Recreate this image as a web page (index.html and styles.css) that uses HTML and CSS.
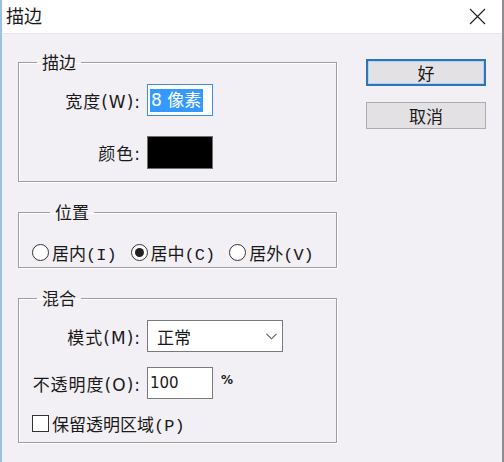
FILE: index.html
```html
<!DOCTYPE html>
<html lang="zh-CN">
<head>
    <meta charset="UTF-8">
    <meta name="viewport" content="width=device-width, initial-scale=1.0">
    <title>描边</title>
    <link rel="stylesheet" href="styles.css">
</head>
<body>
    <div class="dialog">
        <div class="titlebar">
            <span class="title">描边</span>
            <svg class="close" width="17" height="17" viewBox="0 0 17 17">
                <path d="M1 1L16 16M16 1L1 16" stroke="#1e1e1e" stroke-width="1.1" fill="none"/>
            </svg>
        </div>
        <div class="dialog-body">
            <div class="groups">
                <fieldset class="group group-stroke">
                    <legend>描边</legend>
                    <div class="form-grid">
                        <label class="field-label">宽度(W):</label>
                        <div class="text-input focused"><span class="selected">8 像素</span></div>
                        <label class="field-label">颜色:</label>
                        <div class="swatch"></div>
                    </div>
                </fieldset>

                <fieldset class="group group-position">
                    <legend>位置</legend>
                    <div class="radio-row">
                        <span class="radio"><span class="circle"></span>居内(I)</span>
                        <span class="radio"><span class="circle checked"></span>居中(C)</span>
                        <span class="radio"><span class="circle"></span>居外(V)</span>
                    </div>
                </fieldset>

                <fieldset class="group group-blend">
                    <legend>混合</legend>
                    <div class="form-grid">
                        <label class="field-label">模式(M):</label>
                        <div class="select">
                            <span>正常</span>
                            <svg width="11" height="7" viewBox="0 0 11 7">
                                <path d="M0.5 0.8L5.5 5.8L10.5 0.8" stroke="#5a5a5a" stroke-width="1.1" fill="none"/>
                            </svg>
                        </div>
                        <label class="field-label">不透明度(O):</label>
                        <div class="opacity">
                            <div class="text-input">100</div>
                            <span class="unit">%</span>
                        </div>
                    </div>
                    <div class="checkbox-row"><span class="box"></span>保留透明区域(P)</div>
                </fieldset>
            </div>
            <div class="buttons">
                <button class="btn btn-default">好</button>
                <button class="btn">取消</button>
            </div>
        </div>
    </div>
</body>
</html>
```

FILE: styles.css
```css
body {
    margin: 0;
    font-family: "DejaVu Sans", "Noto Sans CJK SC", sans-serif;
    color: #1a1a1a;
    background-color: #f3f0f5;
}
.dialog {
    width: 504px;
    height: 462px;
    box-sizing: border-box;
    border-left: 2px solid #9cc0de;
    border-right: 2px solid #8e8c90;
    background-color: #f3f0f5;
    overflow: hidden;
}
.titlebar {
    height: 34px;
    box-sizing: border-box;
    background-color: #ffffff;
    border-bottom: 1px solid #e9e5eb;
    display: flex;
    align-items: center;
    justify-content: space-between;
    padding: 0 16px 3px 4px;
}
.title {
    font-family: "Noto Sans CJK SC", sans-serif;
    font-size: 18px;
}
.close {
    margin-top: 2px;
}
.dialog-body {
    display: flex;
    align-items: flex-start;
}
.groups {
    display: flex;
    flex-direction: column;
    gap: 20px;
    margin-left: 16px;
    padding-top: 18px;
}
.group {
    width: 319px;
    box-sizing: border-box;
    margin: 0;
    padding: 0;
    min-width: 0;
    border: 1px solid #a09da2;
    box-shadow: 1px 1px 0 #ffffff, inset 1px 1px 0 #ffffff;
}
.group legend {
    font-family: "Noto Sans CJK SC", sans-serif;
    font-size: 17px;
    line-height: 20px;
    padding: 0 5px;
    margin-left: 18px;
}
.group-stroke {
    padding: 12px 0 12px 0;
}
.group-position {
    padding: 20px 0 5px 13px;
}
.group-blend {
    padding: 12px 0 9px 0;
}
.form-grid {
    display: grid;
    grid-template-columns: 122px auto;
    column-gap: 6px;
    row-gap: 20px;
    align-items: center;
}
.group-blend .form-grid {
    row-gap: 15px;
}
.field-label {
    text-align: right;
    font-size: 17px;
    letter-spacing: 1px;
}
.text-input {
    width: 66px;
    height: 32px;
    box-sizing: border-box;
    background-color: #ffffff;
    border: 1px solid #7a7a7a;
    padding-left: 2px;
    display: flex;
    align-items: center;
    font-size: 15px;
}
.text-input.focused {
    border-color: #3d8ee0;
}
.selected {
    background-color: #3399ff;
    color: #ffffff;
    font-size: 17px;
    line-height: 23px;
    padding: 0 2px 0 1px;
}
.swatch {
    width: 66px;
    height: 33px;
    box-sizing: border-box;
    background-color: #000000;
    border: 1px solid #6e6e6e;
}
.radio-row {
    display: flex;
    gap: 14px;
    height: 20px;
    align-items: center;
}
.radio, .checkbox-row {
    display: flex;
    align-items: center;
    font-family: "Liberation Mono", "Noto Sans CJK SC", monospace;
    font-size: 17px;
}
.circle {
    width: 17px;
    height: 17px;
    box-sizing: border-box;
    border: 1px solid #333333;
    border-radius: 50%;
    background-color: #ffffff;
    margin-right: 3px;
    display: flex;
    align-items: center;
    justify-content: center;
}
.circle.checked::after {
    content: "";
    width: 9px;
    height: 9px;
    border-radius: 50%;
    background-color: #222222;
}
.select {
    width: 136px;
    height: 32px;
    box-sizing: border-box;
    background-color: #ffffff;
    border: 1px solid #7a7a7a;
    display: flex;
    align-items: center;
    justify-content: space-between;
    padding: 0 5px 0 9px;
    font-family: "Noto Sans CJK SC", sans-serif;
    font-size: 17px;
}
.opacity {
    display: flex;
    align-items: flex-start;
}
.unit {
    font-size: 12px;
    font-weight: bold;
    margin: 6px 0 0 8px;
}
.checkbox-row {
    height: 20px;
    margin: 14px 0 0 13px;
}
.box {
    width: 17px;
    height: 17px;
    box-sizing: border-box;
    border: 1px solid #333333;
    background-color: #ffffff;
    margin-right: 3px;
}
.buttons {
    display: flex;
    flex-direction: column;
    gap: 16px;
    margin: 25px 0 0 29px;
}
.btn {
    width: 120px;
    height: 27px;
    box-sizing: border-box;
    background-color: #e3e1e4;
    border: 1px solid #adadad;
    font-family: "Noto Sans CJK SC", sans-serif;
    font-size: 17px;
    color: #1a1a1a;
    padding: 0;
    line-height: 1;
}
.btn-default {
    border: 2px solid #2f75b5;
    box-shadow: inset 0 0 0 1px #a8d4f5;
}
```
